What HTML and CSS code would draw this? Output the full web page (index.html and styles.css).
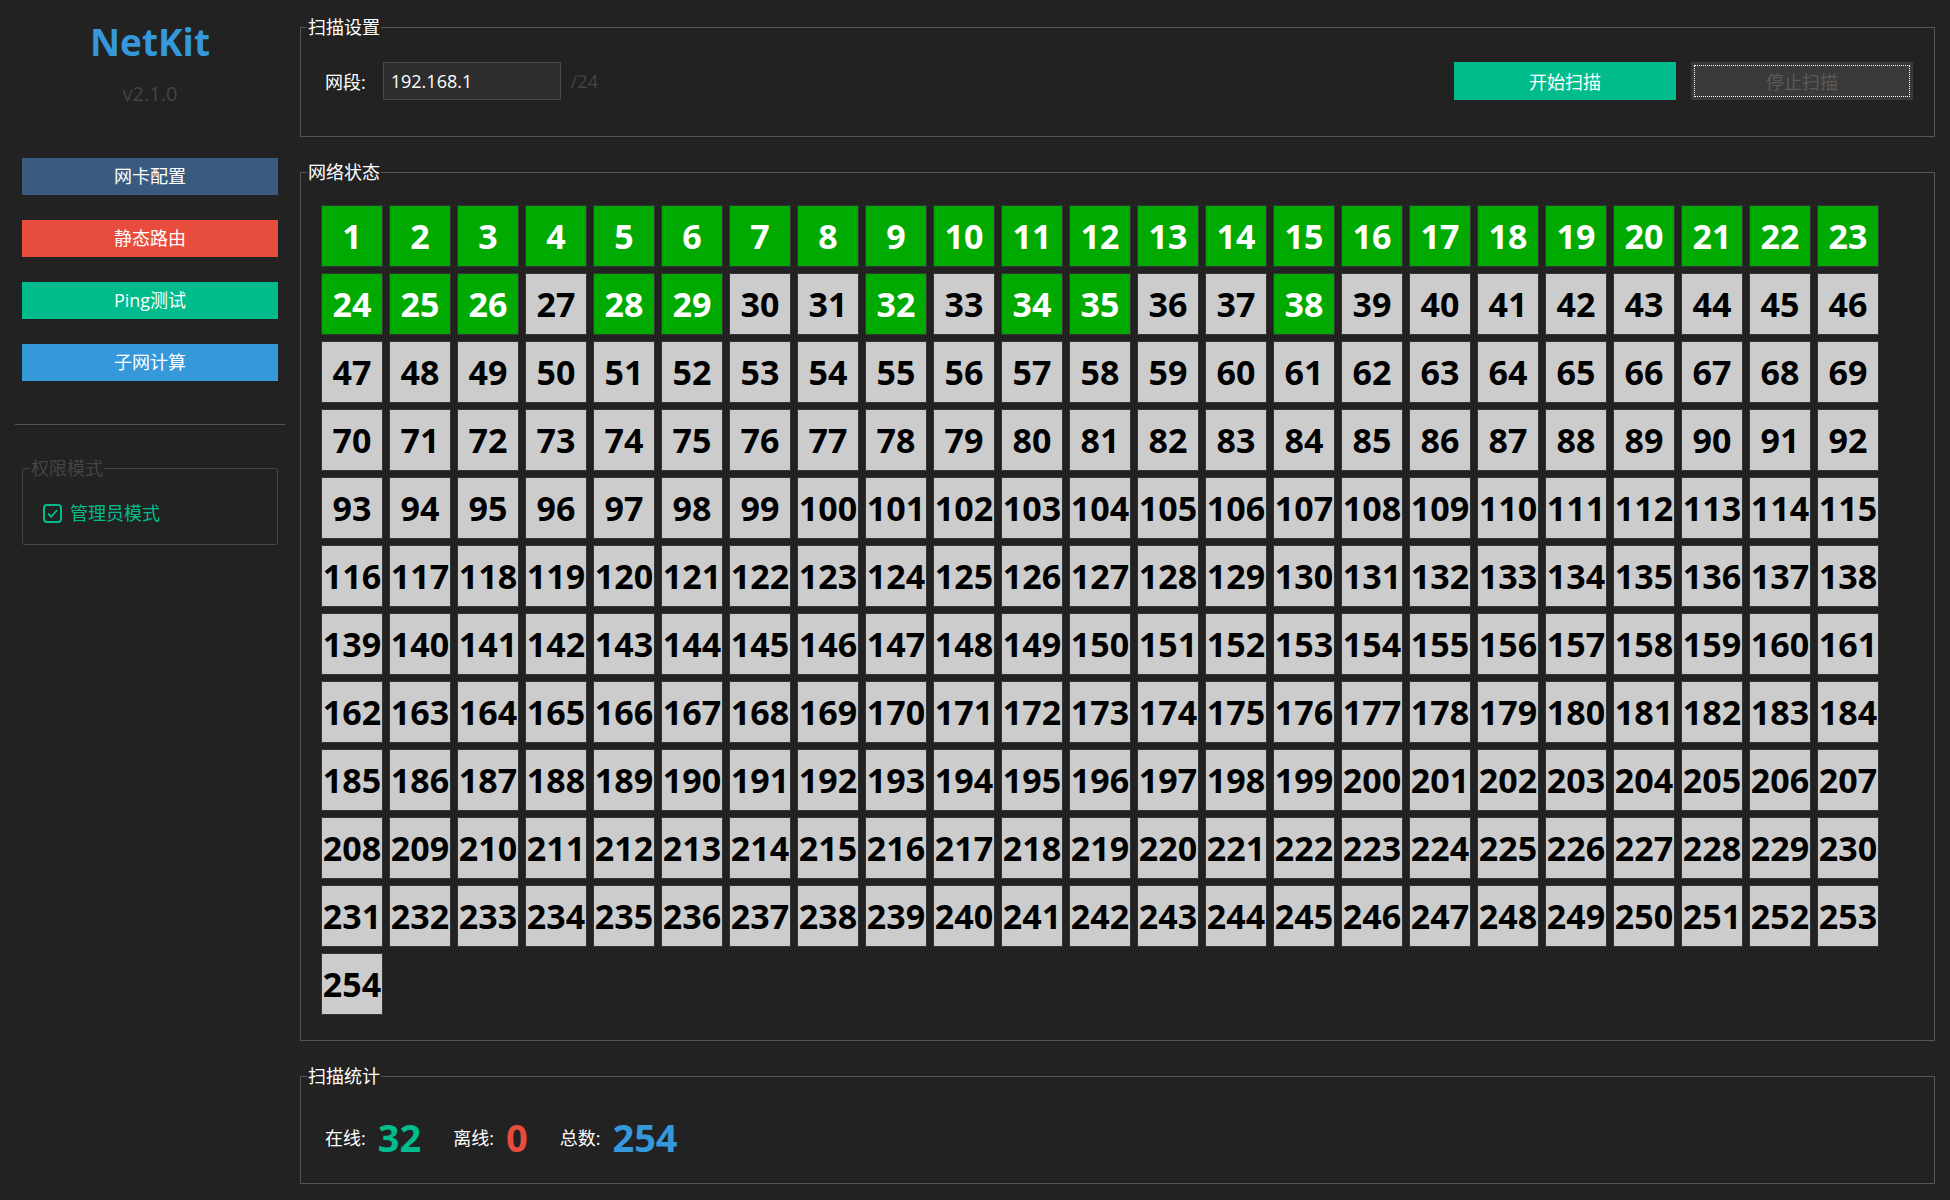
FILE: index.html
```html
<!DOCTYPE html>
<html lang="zh">
<head>
<meta charset="utf-8">
<title>NetKit</title>
<link rel="stylesheet" href="styles.css">
</head>
<body>
<div class="app">
  <aside class="sidebar">
    <div class="brand">NetKit</div>
    <div class="version">v2.1.0</div>
    <nav class="nav">
      <button class="nav-btn nic">网卡配置</button>
      <button class="nav-btn route">静态路由</button>
      <button class="nav-btn ping">Ping测试</button>
      <button class="nav-btn subnet">子网计算</button>
    </nav>
    <div class="sep"></div>
    <fieldset class="perm">
      <legend>权限模式</legend>
      <label class="check">
        <svg class="check-box" width="19" height="19" viewBox="0 0 19 19"><rect x="1" y="1" width="17" height="17" rx="3" fill="none" stroke="#00bc8c" stroke-width="2"/><path d="M5 9.5 L8.2 12.8 L14 6.2" fill="none" stroke="#00bc8c" stroke-width="1.8"/></svg>
        <span>管理员模式</span>
      </label>
    </fieldset>
  </aside>
  <main class="main">
    <fieldset class="group">
      <legend>扫描设置</legend>
      <div class="scan-row">
        <span class="lbl">网段:</span>
        <div class="input">192.168.1</div>
        <span class="mask">/24</span>
        <div class="spacer"></div>
        <button class="btn start">开始扫描</button>
        <button class="btn stop">停止扫描</button>
      </div>
    </fieldset>
    <fieldset class="group">
      <legend>网络状态</legend>
      <div class="grid" id="grid"></div>
    </fieldset>
    <fieldset class="group">
      <legend>扫描统计</legend>
      <div class="stats">
        <span class="stat-lbl">在线:</span><span class="stat-num on">32</span>
        <span class="stat-lbl">离线:</span><span class="stat-num off">0</span>
        <span class="stat-lbl">总数:</span><span class="stat-num total">254</span>
      </div>
    </fieldset>
  </main>
</div>
<script src="app.js"></script>
</body>
</html>
```
FILE: app.js
```js
(function () {
  var online = {};
  for (var i = 1; i <= 26; i++) online[i] = true;
  [28, 29, 32, 34, 35, 38].forEach(function (n) { online[n] = true; });
  var grid = document.getElementById('grid');
  var html = '';
  for (var n = 1; n <= 254; n++) {
    html += '<div class="cell ' + (online[n] ? 'up' : 'down') + '"><span>' + n + '</span></div>';
  }
  grid.innerHTML = html;
})();
```
FILE: styles.css
```css
* { box-sizing: border-box; }
html, body { margin: 0; padding: 0; }
body {
  background: #222222;
  color: #ffffff;
  font-family: "Open Sans", "Noto Sans CJK SC", sans-serif;
  font-size: 18px;
  width: 1950px;
  height: 1200px;
  overflow: hidden;
}
.app { display: flex; height: 1200px; }

/* sidebar */
.sidebar {
  width: 300px;
  flex: none;
  display: flex;
  flex-direction: column;
  align-items: center;
}
.brand {
  margin-top: 17px;
  font-family: "Open Sans", sans-serif;
  font-weight: 700;
  font-size: 37px;
  line-height: 49px;
  color: #3498db;
}
.version {
  margin-top: 14px;
  font-size: 20px;
  line-height: 27px;
  color: #444444;
}
.nav {
  margin-top: 51px;
  display: flex;
  flex-direction: column;
  gap: 25px;
}
.nav-btn {
  width: 256px;
  height: 37px;
  border: none;
  padding: 0;
  color: #ffffff;
  font-family: "Open Sans", "Noto Sans CJK SC", sans-serif;
  font-size: 18px;
  line-height: 37px;
}
.nic { background: #3a5b80; }
.route { background: #e74c3c; }
.ping { background: #00bc8c; }
.subnet { background: #3498db; }
.sep {
  margin-top: 43px;
  width: 270px;
  height: 1px;
  background: #555555;
}
.perm {
  margin: 31px 0 0 0;
  width: 256px;
  border: 1px solid #444444;
  border-radius: 2px;
  padding: 0 0 21px 0;
  min-width: 0;
}
.perm legend {
  margin-left: 7px;
  padding: 0 1px;
  line-height: 24px;
  font-size: 18px;
  color: #444444;
}
.check {
  margin: 23px 0 0 20px;
  display: flex;
  align-items: center;
  gap: 8px;
  color: #00bc8c;
  font-size: 18px;
  line-height: 20px;
}
.check-box { display: block; flex: none; }

/* main */
.main {
  flex: 1;
  margin-right: 15px;
  padding-top: 15px;
  display: flex;
  flex-direction: column;
  gap: 23px;
}
.group {
  margin: 0;
  padding: 0;
  min-width: 0;
  border: 1px solid #555555;
}
.group > legend {
  margin-left: 6px;
  padding: 0 1px;
  font-size: 18px;
  line-height: 24px;
  color: #ffffff;
}
.scan-row {
  display: flex;
  align-items: center;
  padding: 23px 21px 36px 24px;
}
.lbl { color: #ffffff; }
.input {
  margin-left: 17px;
  width: 178px;
  height: 38px;
  background: #2d2d2d;
  border: 1px solid #4a4a4a;
  padding-left: 7px;
  line-height: 36px;
  font-size: 18px;
  color: #ffffff;
}
.mask { margin-left: 10px; color: #444444; }
.spacer { flex: 1; }
.btn {
  width: 222px;
  height: 38px;
  border: none;
  padding: 0;
  font-family: "Open Sans", "Noto Sans CJK SC", sans-serif;
  font-size: 18px;
}
.start { background: #00bc8c; color: #ffffff; }
.stop {
  margin-left: 15px;
  background: #3a3a3a;
  color: #5a5a5a;
  outline: 1px dotted #ffffff;
  outline-offset: -4px;
}

.grid {
  display: grid;
  grid-template-columns: repeat(23, 62px);
  grid-auto-rows: 62px;
  gap: 6px;
  padding: 21px 0 25px 20px;
}
.cell {
  border: 1px solid #333333;
  display: flex;
  align-items: center;
  justify-content: safe center;
  font-family: "Open Sans", sans-serif;
  font-weight: 700;
  font-size: 34px;
  line-height: 40px;
  white-space: nowrap;
  padding: 0 0 1px 0;
}
.cell.up { background: #00aa00; color: #ffffff; }
.cell.down { background: #cccccc; color: #000000; }

.stats {
  height: 95px;
  display: flex;
  align-items: center;
  padding: 2px 0 0 24px;
}
.stat-lbl { font-size: 18px; color: #ffffff; margin-right: 12px; }
.stat-num {
  font-family: "Open Sans", sans-serif;
  font-weight: 700;
  font-size: 38px;
  margin-right: 32px;
}
.on { color: #00bc8c; }
.off { color: #e74c3c; }
.total { color: #3498db; }
```
